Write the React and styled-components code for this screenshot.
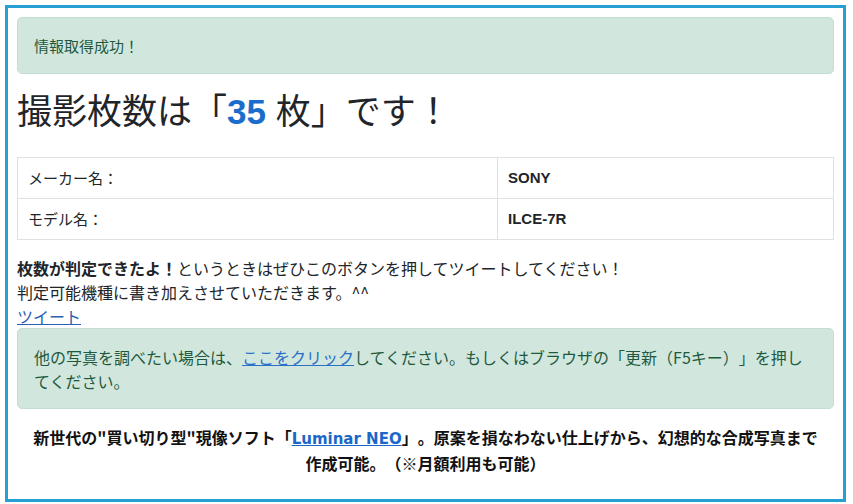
import styled, { createGlobalStyle } from "styled-components"

const GlobalStyle = createGlobalStyle`
    * { box-sizing: border-box; }
    body {
        margin: 0;
        background: #fff;
        color: #212529;
        font-family: "Liberation Sans", "Noto Sans CJK JP", sans-serif;
        font-size: 16px;
        line-height: 1.5;
        text-spacing-trim: space-all;
    }
`

export default function App () {
    return (
        <>
            <GlobalStyle />
            <Frame>
                <Alert size="15px" pad="17px 16px">情報取得成功！</Alert>

                <Titulo>撮影枚数は「<Numero>35</Numero> 枚」です！</Titulo>

                <Tabela>
                    <tbody>
                        {[["メーカー名：", "SONY"], ["モデル名：", "ILCE-7R"]].map(([rotulo, valor]) => (
                            <tr key={rotulo}>
                                <Rotulo>{rotulo}</Rotulo>
                                <Valor>{valor}</Valor>
                            </tr>
                        ))}
                    </tbody>
                </Tabela>

                <Paragrafo>
                    <strong>枚数が判定できたよ！</strong>というときはぜひこのボタンを押してツイートしてください！<br />
                    判定可能機種に書き加えさせていただきます。^^<br />
                    <Link href="#">ツイート</Link>
                </Paragrafo>

                <Alert size="16px" pad="16px 16px 15px">
                    他の写真を調べたい場合は、<Link href="#" light="true">ここをクリック</Link>してください。もしくはブラウザの「更新（F5キー）」を押してください。
                </Alert>

                <Rodape>
                    新世代の"買い切り型"現像ソフト「<Luminar href="#">Luminar NEO</Luminar>」。原案を損なわない仕上げから、幻想的な合成写真まで<br />
                    作成可能。（※月額利用も可能）
                </Rodape>
            </Frame>
        </>
    )
}

const Frame = styled.div`
    margin: 5px 7px 3px 5px;
    border: 3px solid #269fd2;
    padding: 9px 9px 24px;
`
const Alert = styled.div`
    background-color: #d1e7dd;
    border: 1px solid #c3dfd2;
    border-radius: 5px;
    color: #1f5a3f;
    font-family: "Noto Sans CJK JP", sans-serif;
    font-size: ${props => props.size};
    line-height: ${props => props.size === "15px" ? "21px" : "24px"};
    padding: ${props => props.pad};
    margin-bottom: 16px;
`
const Titulo = styled.h1`
    margin: 18px 0 25px;
    font-family: "Liberation Sans", "Noto Sans CJK JP", sans-serif;
    font-size: 35px;
    font-weight: 400;
    line-height: 40px;
    color: #212529;
`
const Numero = styled.span`
    color: #1a6dcc;
    font-weight: 700;
`
const Tabela = styled.table`
    width: 100%;
    border-collapse: collapse;
    margin-bottom: 16px;
    font-size: 15px;
`
const Rotulo = styled.td`
    width: 480px;
    border: 1px solid #dee2e6;
    padding: 10px 10px;
    height: 41px;
    font-family: "Noto Sans CJK JP", sans-serif;
    line-height: 20px;
`
const Valor = styled.td`
    border: 1px solid #dee2e6;
    padding: 10px 10px;
    height: 41px;
    font-family: "Liberation Sans", sans-serif;
    font-weight: 700;
    line-height: 20px;
`
const Paragrafo = styled.p`
    margin: 0;
    font-family: "Noto Sans CJK JP", sans-serif;
    font-size: 16px;
    line-height: 24px;
`
const Link = styled.a`
    color: ${props => props.light ? "#2a6fc9" : "#2b5fb3"};
    text-decoration: underline;
`
const Rodape = styled.div`
    text-align: center;
    font-family: "Noto Sans CJK JP", sans-serif;
    font-weight: 700;
    font-size: 16px;
    line-height: 24px;
    color: #111;
`
const Luminar = styled.a`
    font-family: "DejaVu Sans", sans-serif;
    font-size: 15px;
    color: #1a67c9;
    text-decoration: underline;
`
